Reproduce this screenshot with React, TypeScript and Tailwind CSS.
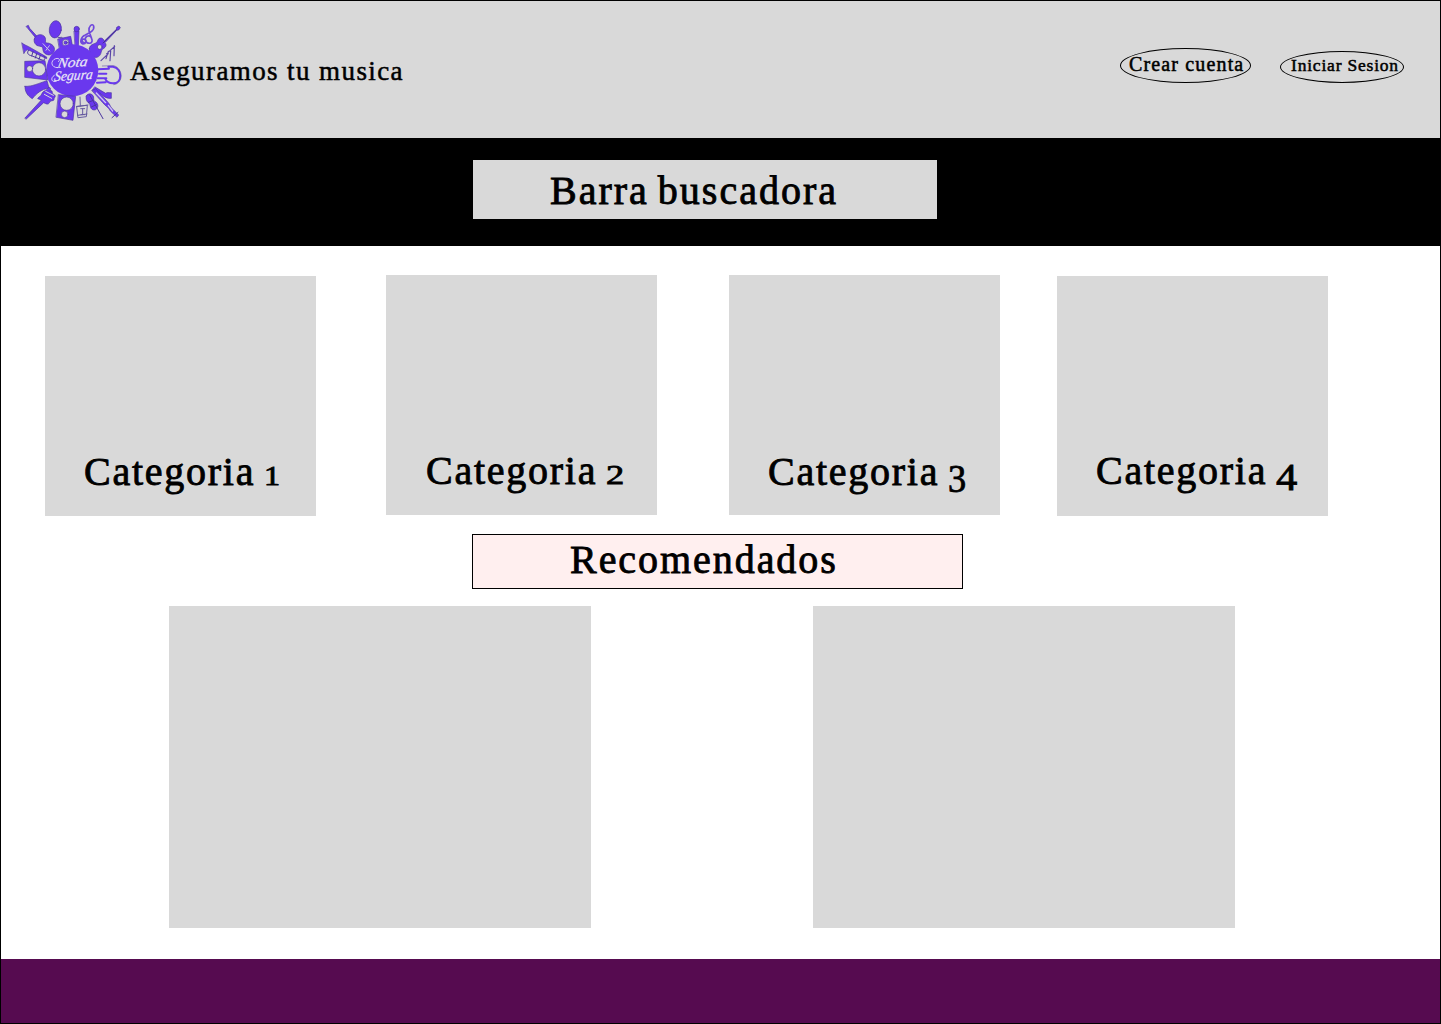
import React from "react";

const serif = "font-['Liberation_Serif',serif] text-black whitespace-nowrap leading-none";
const fine = "[-webkit-text-stroke:0.5px_#000]";
const bold = "[-webkit-text-stroke:0.85px_#000]";

function Logo() {
  return (
    <svg width="110" height="110" viewBox="0 0 330 330" fill="#6a38ee" stroke="#4b35a0" strokeWidth="2" strokeLinejoin="round" strokeLinecap="round">
      {/* violin and trumpet */}
      <path d="M34 34l6-3 4 9 24 26-5 4-23-28z" />
      <path d="M58 72c2-12 20-18 30-8 7 8 1 13 5 20 9-1 22 4 25 15 3 12-9 24-21 20-13-4-13-13-14-21-5-7-13-2-20-9-5-5-7-11-5-17z" />
      <path d="M84 86l20 22M103 92l-10 14" fill="none" stroke="#c9c0e8" strokeWidth="3" />
      <path d="M21 84c6 5 12 7 20 11l54 31v5l-54-26c-7-2-10 3-14 10z" />
      <path d="M41 106c-8 8 0 15 8 16l32 13c8 3 12-5 6-12M54 110l-4 13M65 116l-4 13M76 121l-4 12" fill="none" strokeWidth="3" />
      {/* balloon maraca and amplifier */}
      <ellipse cx="121" cy="43" rx="18" ry="26" transform="rotate(8 121 43)" />
      <path d="M129 67c9 3 14-5 14 6" fill="none" strokeWidth="3" />
      <path d="M129 72l38-8 6 32-38 12z" />
      <circle cx="152" cy="83" r="10" fill="#d9d9d9" />
      <circle cx="152" cy="83" r="5" />
      {/* microphone */}
      <path d="M178 48h14l-2 46h-9z" />
      <ellipse cx="185" cy="42" rx="8" ry="8" />
      {/* treble clef */}
      <path d="M207 83c-9-2-6-13 2-10 8 4 4 14-5 14-12-3-6-22 7-27 16-8 28-14 25-27-4-10-16 1-14 15l9 26c3 13-15 15-20 2-2-11 10-18 18-9" fill="none" stroke="#7049dc" strokeWidth="5" />
      {/* guitar */}
      <path d="M223 101c0-12 14-14 21-18 6-5 4-15 14-14 5 0 8 5 10 9l36-35 1-6 7-4 4 5-5 7-6 1-35 37c8 9-1 16-8 20-5 7-2 19-16 24-13 3-24-11-23-26z" />
      <circle cx="254" cy="96" r="7" fill="#d9d9d9" />
      <path d="M264 84l41-40" fill="none" stroke="#342b69" />
      {/* chime bars */}
      <path d="M258 137l22-21M273 131l7-22M285 137l2-30M297 122l1-30M275 116l24-22" fill="none" stroke="#5a45a8" strokeWidth="3.5" />
      {/* banjo */}
      <path d="M248 163l34-2M252 176h22M248 190h26M246 203l26-1M280 155h14c29 6 29 50 0 50-13 0-20-6-24-14" fill="none" stroke="#6a38ee" strokeWidth="6" />
      <path d="M262 153l34-1c29 8 31 54 0 57" fill="none" strokeWidth="1.5" />
      {/* central disc */}
      <circle cx="172" cy="166" r="78" stroke="none" />
      {/* left loudspeaker */}
      <path d="M30 139l60-2 8 58-68-8z" />
      <circle cx="72" cy="163" r="20" fill="#d9d9d9" />
      <circle cx="44" cy="161" r="9" fill="#d9d9d9" />
      {/* bell */}
      <path d="M30 214c22 1 40-9 66-17l6 22c-25 5-37 16-50 32-14-7-23-22-22-37z" />
      {/* electric guitar */}
      <path d="M30 309l49-54-11-4c3-7 10-6 12-14 4-11 15-9 20-19 7-3 8 5 5 9 11-2 3 9 12 12 9 4-1 9 0 15 0 5-12 1-13 8-5 10-13 3-18 1l-52 49z" />
      <path d="M88 238l22 12M92 229l23 12" stroke="#d9d9d9" strokeWidth="3" />
      {/* lower loudspeaker */}
      <path d="M131 239l51 5-8 72-50-9z" />
      <circle cx="155" cy="266" r="20" fill="#d9d9d9" />
      <circle cx="149" cy="298" r="10" fill="#d9d9d9" />
      {/* drum */}
      <path d="M186 274l31-3-3 34-24 3zM184 275l35-5M188 301l28-4M196 273l-1-27M197 281h12M203 281v18M198 299h11" fill="none" stroke="#655aa0" strokeWidth="3" />
      {/* lower violin */}
      <path d="M214 243c5-12 23-6 22 6 0 8 2 10 8 13 9 9 4 23-7 23-11-1-11-12-13-19-8-4-13-14-10-23z" />
      <path d="M224 240l40 71M220 262l15-6M229 276l15-7" fill="none" strokeWidth="3" />
      {/* horn and clarinet */}
      <path d="M240 216l32 19c5-4 10-1 17-2v17c-12 1-22-4-29-11l-27-13z" />
      <path d="M231 226l11-5 38 42c5 5 7 16 14 20l17 17-5 7-20-19c-5-11-15-15-22-24z" />
      <path d="M244 234l28 29M280 271l13 17" fill="none" stroke="#cfc4f3" strokeWidth="4" />
      <path d="M309 292l-18 16" fill="none" strokeWidth="3" />
      <g fill="#ece9f6" stroke="#ece9f6" strokeWidth="0.6" fontFamily="'Liberation Serif', serif" fontStyle="italic">
        <text x="0" y="0" fontSize="42" textLength="90" lengthAdjust="spacingAndGlyphs" transform="translate(126 158) rotate(-3) skewX(-12)">Nota</text>
        <text x="0" y="0" fontSize="42" textLength="116" lengthAdjust="spacingAndGlyphs" transform="translate(116 198) rotate(-3) skewX(-10)">Segura</text>
      </g>
      <path d="M128 158c-22 0-22-22-6-27 11-3 15 4 8 9M118 181c-14 8-8 23 6 18" fill="none" stroke="#ece9f6" strokeWidth="2.5" />
    </svg>
  );
}

const categories = [
  { digit: "1", box: "mt-[30px] ml-11", text: "pt-[176px] pl-[39px]", num: "text-[28px] scale-x-[1.15]" },
  { digit: "2", box: "mt-[29px] ml-[70px]", text: "pt-[176px] pl-10", num: "text-[28px] scale-x-[1.3]" },
  { digit: "3", box: "mt-[29px] ml-[72px]", text: "pt-[177px] pl-[39px]", num: "text-[39px] translate-y-[7px] scale-x-[0.93]" },
  { digit: "4", box: "mt-[30px] ml-[57px]", text: "pt-[175px] pl-[39px]", num: "text-[38px] translate-y-1.5 scale-x-[1.12]" },
];

export default function App() {
  return (
    <div className="flex h-[1024px] w-[1441px] flex-col overflow-hidden border border-black bg-white">
      <header className="flex h-[137px] shrink-0 items-start bg-[#d9d9d9]">
        <div className="mt-3.5 ml-3.5 h-[110px] w-[110px] shrink-0"><Logo /></div>
        <p className={`${serif} ${fine} mt-[57px] ml-[5px] w-[280px] text-[27px] tracking-[1.4px]`}>Aseguramos tu musica</p>
        <button className="mt-[47px] ml-[710px] flex h-[35px] w-[131px] shrink-0 items-start rounded-[50%] border border-black pt-[5px] pl-2">
          <span className={`${serif} ${fine} text-[20px] tracking-[1.15px]`}>Crear cuenta</span>
        </button>
        <button className="mt-[50px] ml-[29px] flex h-8 w-[124px] shrink-0 items-start rounded-[50%] border border-black pt-[5px] pl-2.5">
          <span className={`${serif} ${fine} text-[17.5px] tracking-[0.8px]`}>Iniciar Sesion</span>
        </button>
      </header>
      <section className="h-[108px] shrink-0 bg-black pt-[22px] pl-[472px]">
        <div className="h-[59px] w-[464px] bg-[#d9d9d9] pt-[11px] pl-[77px]">
          <p className={`${serif} ${bold} text-[40px] tracking-[2px] [word-spacing:-3px]`}>Barra buscadora</p>
        </div>
      </section>
      <section className="flex h-[288px] shrink-0 items-start">
        {categories.map((c) => (
          <div key={c.digit} className={`h-60 w-[271px] shrink-0 bg-[#d9d9d9] ${c.box}`}>
            <p className={`${serif} ${bold} flex items-baseline text-[40px] tracking-[1.75px] [word-spacing:-3px] ${c.text}`}>
              <span className="whitespace-pre">Categoria </span>
              <span className={`inline-block origin-left tracking-normal ${c.num}`}>{c.digit}</span>
            </p>
          </div>
        ))}
      </section>
      <div className="ml-[471px] h-[55px] w-[491px] shrink-0 border border-black bg-[#ffefef] pt-[5px] pl-[97px]">
        <p className={`${serif} ${bold} text-[40px] tracking-[1.95px]`}>Recomendados</p>
      </div>
      <section className="mt-[17px] ml-[168px] flex shrink-0 gap-[222px]">
        <div className="h-[322px] w-[422px] bg-[#d9d9d9]" />
        <div className="h-[322px] w-[422px] bg-[#d9d9d9]" />
      </section>
      <footer className="mt-auto h-16 shrink-0 bg-[#560b50]" />
    </div>
  );
}
